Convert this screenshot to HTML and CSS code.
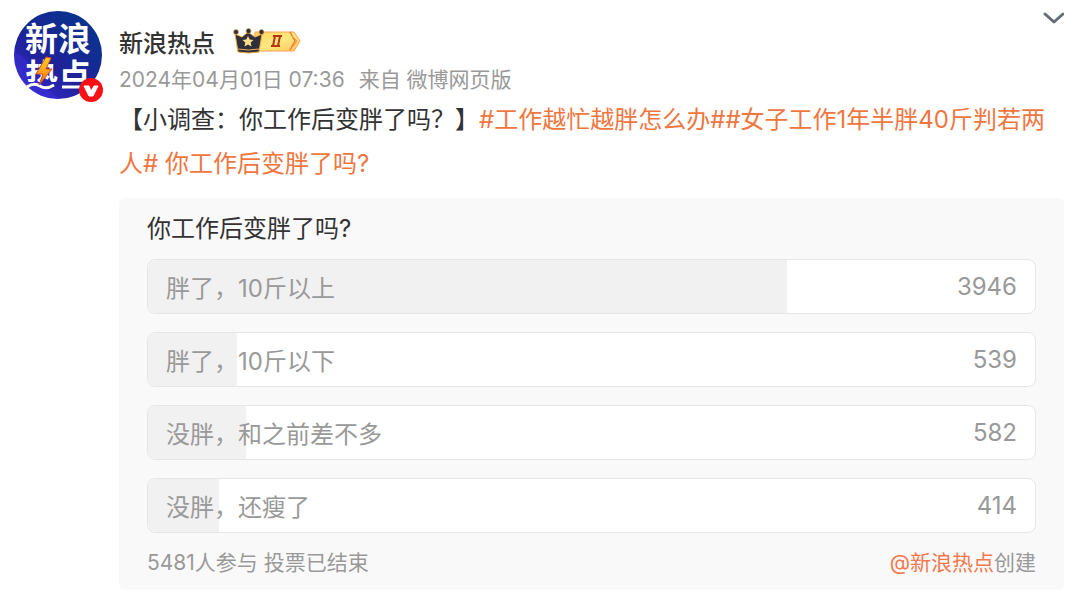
FILE: index.html
```html
<!DOCTYPE html>
<html lang="zh-CN">
<head>
<meta charset="utf-8">
<meta name="viewport" content="width=device-width, initial-scale=1">
<title>新浪热点</title>
<link rel="stylesheet" href="styles.css">
</head>
<body>
<article class="post">
  <a class="avatar" href="#" aria-label="新浪热点">
    <svg class="avatar-art" viewBox="0 0 90 92" aria-hidden="true">
      <defs>
        <linearGradient id="disc" x1="0" y1="1" x2="0.8" y2="0">
          <stop offset="0" stop-color="#3b2be0"/>
          <stop offset="0.45" stop-color="#1f2299"/>
          <stop offset="1" stop-color="#06358c"/>
        </linearGradient>
        <linearGradient id="bolt" x1="0" y1="0" x2="0" y2="1">
          <stop offset="0" stop-color="#ffd21f"/>
          <stop offset="0.6" stop-color="#ff9a1a"/>
          <stop offset="1" stop-color="#f0561c"/>
        </linearGradient>
        <clipPath id="upper"><rect x="0" y="44" width="90" height="26"/></clipPath>
      </defs>
      <circle cx="44" cy="43" r="44" fill="url(#disc)"/>
      <path d="M0 40Q14 46 20 60T46 87A44 44 0 0 1 0 40Z" fill="#4634ee" opacity=".35"/>
      <text class="avatar-text" x="11" y="39">新浪</text>
      <g clip-path="url(#upper)"><text class="avatar-text" x="11" y="76">热点</text></g>
      <path d="M13 75Q20 70 26 74T40 73" fill="none" stroke="#fff" stroke-width="3"/>
      <path d="M48 75H68" stroke="#fff" stroke-width="3"/>
      <path d="M32 45L22 62H29L25 73L38 57H32L37 46Z" fill="url(#bolt)" stroke="#d9471c" stroke-width="1"/>
      <circle cx="77" cy="78" r="12" fill="#fa0f14"/>
      <path d="M70 74H75L77 79L80 74H84L79 84H75Z" fill="#fff" stroke="#fff" stroke-width="1" stroke-linejoin="round"/>
    </svg>
  </a>
  <div class="main">
    <header class="head">
      <div class="who">
        <div class="name-row">
          <a class="name" href="#">新浪热点</a>
          <svg class="vip" viewBox="0 0 68 26" role="img" aria-label="会员 II">
            <defs>
              <linearGradient id="gold" x1="0" y1="0" x2="1" y2="1">
                <stop offset="0" stop-color="#ffd45c"/>
                <stop offset="0.5" stop-color="#ffe97f"/>
                <stop offset="1" stop-color="#ffc65c"/>
              </linearGradient>
            </defs>
            <path d="M22 4H61L67 13L61 23H22Z" fill="url(#gold)" stroke="#f9a052" stroke-width="1"/>
            <path d="M57 4L62 13L57 22" fill="none" stroke="#ee7a3b" stroke-width="1.5"/>
            <path d="M59 8L64 13L60 19" fill="none" stroke="#f79a4c" stroke-width="1"/>
            <path d="M40 8H49M38 18H47M42 8L40 18M47 8L45 18" stroke="#b8330f" stroke-width="2" fill="none"/>
            <path d="M2 6L9 9L15 4L22 9L29 6L26 24Q15 26 5 24Z" fill="#30303c" stroke="#f0b047" stroke-width="1"/>
            <path d="M5 21Q15 23 26 21" fill="none" stroke="#e9ae55" stroke-width="1"/>
            <circle cx="3" cy="4" r="2.5" fill="#30303c" stroke="#f0b047" stroke-width=".7"/>
            <circle cx="15.500" cy="3" r="2.500" fill="#30303c" stroke="#f0b047" stroke-width=".7"/>
            <circle cx="28.500" cy="4" r="2.500" fill="#30303c" stroke="#f0b047" stroke-width=".7"/>
            <path d="M15 8L16.700 11.500L20.500 12L17.700 14.600L18.500 18.500L15 16.500L11.500 18.500L12.300 14.600L9.500 12L13.300 11.500Z" fill="#ffe08a"/>
          </svg>
        </div>
        <div class="meta"><time datetime="2024-04-01T07:36">2024年04月01日 07:36</time><span>来自 微博网页版</span></div>
      </div>
      <button class="more" type="button" aria-label="更多">
        <svg class="more-icon" viewBox="0 0 24 16" aria-hidden="true"><path d="M5 2L14 10L23 2" fill="none" stroke="#676b76" stroke-width="3" stroke-linecap="round" stroke-linejoin="round"/></svg>
      </button>
    </header>
    <p class="body">【小调查：你工作后变胖了吗？】<a href="#">#工作越忙越胖怎么办#</a><a href="#">#女子工作1年半胖40斤判若两人#</a> <a href="#">你工作后变胖了吗?</a></p>
    <section class="poll">
      <h2 class="question">你工作后变胖了吗?</h2>
      <ul class="options">
        <li class="option"><div class="bar" style="width:72%"></div><span class="label">胖了，10斤以上</span><span class="count">3946</span></li>
        <li class="option"><div class="bar" style="width:10%"></div><span class="label">胖了，10斤以下</span><span class="count">539</span></li>
        <li class="option"><div class="bar" style="width:11%"></div><span class="label">没胖，和之前差不多</span><span class="count">582</span></li>
        <li class="option"><div class="bar" style="width:8%"></div><span class="label">没胖，还瘦了</span><span class="count">414</span></li>
      </ul>
      <footer class="foot"><span>5481人参与 投票已结束</span><span><a href="#">@新浪热点</a>创建</span></footer>
    </section>
  </div>
</article>
</body>
</html>
```
FILE: styles.css
```css
* {
  box-sizing: border-box;
}

body {
  margin: 0;
  background: #fff;
  color: #333;
  font-family: Inter, "Noto Sans CJK SC", sans-serif;
  font-size: 24px;
  font-weight: 400;
}

a {
  color: #f2784f;
  text-decoration: none;
}

.post {
  display: flex;
  gap: 15px;
  padding: 12px 16px 4px 14px;
}

.avatar {
  flex: none;
  width: 90px;
}

.avatar-art {
  display: block;
  width: 90px;
  height: 92px;
  overflow: visible;
}

.avatar-text {
  fill: #fff;
  font-size: 33px;
  font-weight: 700;
}

.main {
  flex: 1;
  min-width: 0;
}

.head {
  display: flex;
  justify-content: space-between;
  align-items: flex-start;
}

.who {
  padding-top: 12px;
}

.name-row {
  display: flex;
  align-items: center;
  gap: 18px;
  height: 38px;
}

.name {
  margin-bottom: 4px;
  color: #333;
  font-weight: 500;
}

.vip {
  width: 68px;
  height: 26px;
  margin-bottom: 4px;
}

.meta {
  display: flex;
  gap: 14px;
  color: #999;
  font-size: 21px;
  line-height: 36px;
}

.more {
  padding: 0;
  border: 0;
  background: none;
}

.more-icon {
  display: block;
  width: 24px;
  height: 16px;
}

.body {
  margin: 0;
  line-height: 44px;
}

.body a {
  color: #f0763f;
}

.poll {
  margin-top: 12px;
  padding: 13px 28px 9px;
  border-radius: 6px;
  background: #f9f9f9;
}

.question {
  margin: 0 0 12px;
  font-size: 24px;
  font-weight: 400;
  line-height: 36px;
}

.options {
  display: flex;
  flex-direction: column;
  gap: 18px;
  margin: 0;
  padding: 0;
  list-style: none;
}

.option {
  position: relative;
  display: flex;
  justify-content: space-between;
  align-items: center;
  height: 55px;
  padding: 0 18px;
  overflow: hidden;
  border: 1px solid #e6e6e6;
  border-radius: 8px;
  background: #fff;
  color: #999;
}

.bar {
  position: absolute;
  inset: 0 auto 0 0;
  background: #f1f1f1;
}

.label,
.count {
  position: relative;
}

.foot {
  display: flex;
  justify-content: space-between;
  margin-top: 12px;
  color: #999;
  font-size: 21px;
  line-height: 36px;
}
```
